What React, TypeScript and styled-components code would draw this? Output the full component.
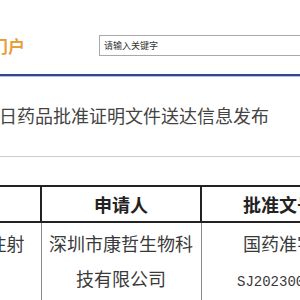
import styled, { createGlobalStyle } from 'styled-components'

const GlobalStyle = createGlobalStyle`
    html, body {
        margin: 0;
        padding: 0;
        background: #ffffff;
        overflow: hidden;
    }
    body {
        font-family: "Noto Sans CJK SC", "Noto Sans", sans-serif;
        color: #333;
    }
`

const Header = styled.div`
    box-sizing: border-box;
    height: 74px;
    padding-top: 17px;
    display: flex;
    align-items: center;
`
const Logo = styled.div`
    width: 25px;
    flex-shrink: 0;
    display: flex;
    justify-content: flex-end;
    white-space: nowrap;
    color: #e6a03c;
    font-size: 17px;
    font-weight: bold;
`
const SearchBox = styled.input`
    box-sizing: border-box;
    flex-shrink: 0;
    margin-left: 74px;
    width: 240px;
    height: 21px;
    border: 1px solid #a9a9a9;
    padding: 0 4px;
    font-family: "Noto Sans CJK SC", sans-serif;
    font-size: 9px;
    outline: none;
    &::placeholder {
        color: #333;
    }
`
const BlueRule = styled.div`
    height: 2px;
    background: #34478a;
    border-bottom: 1px solid #b7c0dc;
`
const Title = styled.div`
    padding: 26px 0 29px;
    border-bottom: 1px solid #cccccc;
    font-size: 18px;
    line-height: 24px;
    color: #444;
    white-space: nowrap;
    text-indent: -1px;
`
const Table = styled.table`
    margin-top: 28px;
    margin-left: -82px;
    border-collapse: collapse;
    table-layout: fixed;
    width: 600px;
`
const Th = styled.th`
    height: 34px;
    padding: 0;
    border: 2px solid #222;
    font-size: 18px;
    font-weight: bold;
    color: #222;
    text-align: center;
`
const Td = styled.td<{ $align?: string }>`
    padding: 3px 2px 0;
    border: 1px solid #8c8c8c;
    border-top: 2px solid #222;
    font-size: 18px;
    line-height: 35px;
    color: #3a3a3a;
    vertical-align: top;
    text-align: ${p => p.$align || 'center'};
`
const Code = styled.span`
    font-family: "Liberation Mono", "DejaVu Sans Mono", monospace;
    font-size: 14px;
`

export default function App() {
    return (
        <>
            <GlobalStyle />
            <Header>
                <Logo>网上办事门户</Logo>
                <SearchBox placeholder="请输入关键字" />
            </Header>
            <BlueRule />
            <Title>日药品批准证明文件送达信息发布</Title>
            <Table>
                <colgroup>
                    <col style={{ width: 122 }} />
                    <col style={{ width: 160 }} />
                    <col style={{ width: 156 }} />
                    <col style={{ width: 162 }} />
                </colgroup>
                <thead>
                    <tr>
                        <Th></Th>
                        <Th>申请人</Th>
                        <Th>批准文号</Th>
                        <Th>送达日期</Th>
                    </tr>
                </thead>
                <tbody>
                    <tr>
                        <Td $align="right" style={{ paddingRight: 16 }}>注射</Td>
                        <Td>深圳市康哲生物科技有限公司</Td>
                        <Td>国药准字<br /><Code>SJ20230007</Code></Td>
                        <Td>2023年</Td>
                    </tr>
                </tbody>
            </Table>
        </>
    )
}
